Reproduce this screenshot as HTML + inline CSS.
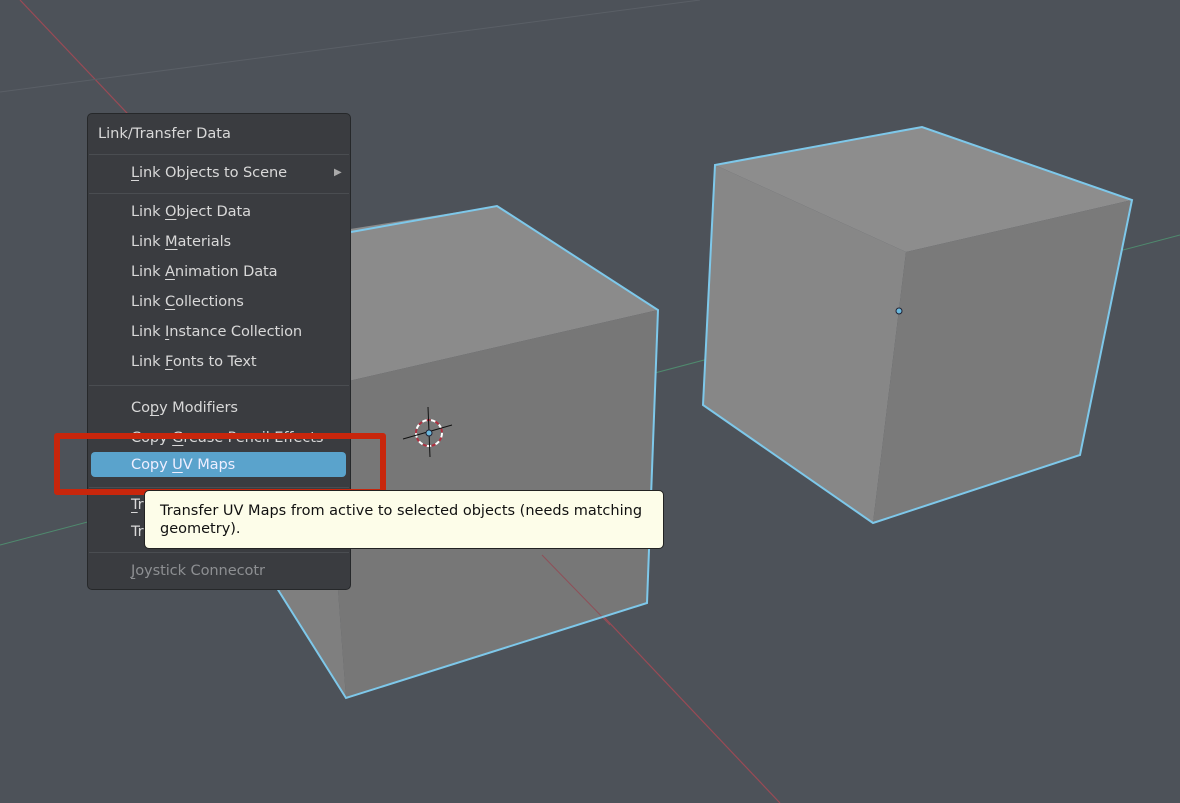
<!DOCTYPE html>
<html><head><meta charset="utf-8"><style>
html,body{margin:0;padding:0;width:1180px;height:803px;overflow:hidden;background:#4d5259;font-family:"DejaVu Sans","Liberation Sans",sans-serif;}
svg{position:absolute;left:0;top:0}
.menu{position:absolute;left:87px;top:113px;width:264px;height:477px;background:#3a3c40;border:1px solid #26282a;border-radius:5px;box-sizing:border-box;color:#d8d8d8;font-size:14.6px}
.t{position:absolute;left:10px;white-space:nowrap}
.i{position:absolute;left:43px;white-space:nowrap;letter-spacing:-0.1px}
.sep{position:absolute;left:1px;right:1px;height:1px;background:#4a4d51}
.hl{position:absolute;left:3px;width:255px;height:25px;top:338px;background:#5aa3cc;border-radius:4px}
.u{text-decoration:underline;text-underline-offset:3px}
.tip{position:absolute;left:144px;top:490px;width:520px;height:59px;background:#fdfde9;border:1px solid #222;border-radius:5px;box-sizing:border-box;color:#111;font-size:14.5px;line-height:18px;padding:11px 0 0 15px}
.red{position:absolute;left:54px;top:433px;width:332px;height:62px;border:6px solid #c8260c;border-radius:3px;box-sizing:border-box}
</style></head><body>
<svg width="1180" height="803">
<line x1="20" y1="0" x2="780" y2="803" stroke="#9a4a55" stroke-width="1.2"/>
<line x1="0" y1="92" x2="700" y2="0" stroke="#5a5f66" stroke-width="1"/>
<line x1="0" y1="545" x2="1180" y2="235" stroke="#4f8a6e" stroke-width="1"/>
<!-- right cube -->
<polygon points="715,165 922,127 1132,200 906,252" fill="#8d8d8d"/>
<polygon points="715,165 906,252 873,523 703,405" fill="#878787"/>
<polygon points="906,252 1132,200 1080,455 873,523" fill="#7a7a7a"/>
<polygon points="715,165 922,127 1132,200 1080,455 873,523 703,405" fill="none" stroke="#7ec8ea" stroke-width="2"/>
<circle cx="899" cy="311" r="3" fill="#6ab8dc" stroke="#223" stroke-width="1"/>
<!-- left cube -->
<polygon points="280,240 497,206 658,310 340,383" fill="#8b8b8b"/>
<polygon points="340,383 658,310 647,603 346,698 338,590" fill="#777777"/>
<polygon points="280,260 340,383 338,590 346,698 275,585" fill="#7f7f7f"/>
<line x1="542" y1="555" x2="610" y2="625" stroke="#8f4f58" stroke-width="1"/>
<polyline points="351,232 497,206 658,310 647,603 346,698 275,585" fill="none" stroke="#7ec8ea" stroke-width="2"/>
<!-- 3d cursor -->
<circle cx="429" cy="433" r="13" fill="none" stroke="#fff" stroke-width="2" stroke-dasharray="5 4"/>
<circle cx="429" cy="433" r="13" fill="none" stroke="#b03040" stroke-width="2" stroke-dasharray="4 5" stroke-dashoffset="4.5"/>
<line x1="403" y1="439" x2="452" y2="425" stroke="#111" stroke-width="1"/>
<line x1="428" y1="407" x2="430" y2="457" stroke="#111" stroke-width="1"/>
<circle cx="429" cy="433" r="3" fill="#6ab8dc" stroke="#223" stroke-width="1"/>
</svg>
<div class="menu">
<div class="t" style="top:11px">Link/Transfer Data</div>
<div class="sep" style="top:40px"></div>
<div class="i" style="top:50px"><span class="u">L</span>ink Objects to Scene</div>
<div style="position:absolute;left:246px;top:53px;font-size:10px;color:#aaa">▶</div>
<div class="sep" style="top:79px"></div>
<div class="i" style="top:89px">Link <span class="u">O</span>bject Data</div>
<div class="i" style="top:119px">Link <span class="u">M</span>aterials</div>
<div class="i" style="top:149px">Link <span class="u">A</span>nimation Data</div>
<div class="i" style="top:179px">Link <span class="u">C</span>ollections</div>
<div class="i" style="top:209px">Link <span class="u">I</span>nstance Collection</div>
<div class="i" style="top:239px">Link <span class="u">F</span>onts to Text</div>
<div class="sep" style="top:271px"></div>
<div class="i" style="top:285px">Co<span class="u">p</span>y Modifiers</div>
<div class="i" style="top:315px">Copy <span class="u">G</span>rease Pencil Effects</div>
<div class="hl"></div>
<div class="i" style="top:342px;color:#eef">Copy <span class="u">U</span>V Maps</div>
<div class="sep" style="top:373px"></div>
<div class="i" style="top:382px"><span class="u">T</span>ransfer Mesh Data</div>
<div class="i" style="top:409px">Transfer Mesh Data Layout</div>
<div class="sep" style="top:438px"></div>
<div class="i" style="top:448px;color:#8d8f92"><span class="u">J</span>oystick Connecotr</div>
</div>
<div class="red"></div>
<div class="tip">Transfer UV Maps from active to selected objects (needs matching<br>geometry).</div>
</body></html>
